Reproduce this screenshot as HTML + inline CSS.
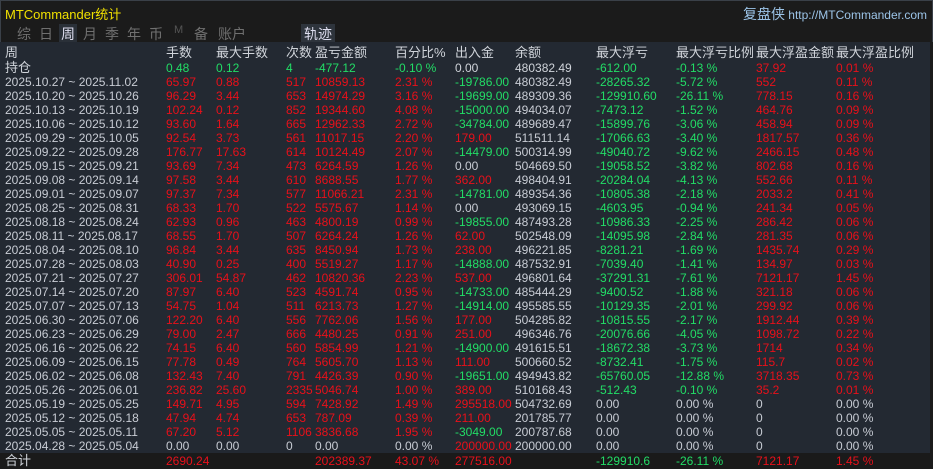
<!DOCTYPE html>
<html><head><meta charset="utf-8"><style>
body{margin:0;width:933px;height:469px;background:#1b1b1b;overflow:hidden;font-family:"Liberation Sans","Noto Sans CJK SC",sans-serif;position:relative}
.top{position:absolute;left:0;top:0;width:931px;height:41px;background:#1b1b1b;border:1px solid #3a4048;border-bottom:none}
.title{position:absolute;left:5px;top:4px;color:#f0e000;font-size:13px}
.site{position:absolute;right:6px;top:4px;color:#9cc4e8;font-size:12px}
.site b{font-weight:normal;font-size:14px}
.tabs{position:absolute;top:24px;left:17px;font-size:14px;color:#707070}
.tabs span{position:absolute;white-space:nowrap}
.panel{position:absolute;left:0;top:42px;width:930px;height:411px;background:#232932}
.tot{position:absolute;left:0;top:453px;width:930px;height:16px;background:#1a1a1a}
.row{position:absolute;left:0;height:14px;font-size:12px;line-height:14px;white-space:nowrap;color:#c8ccd4}
.row span{position:absolute}
.row span:nth-child(1){left:5px}.row span:nth-child(2){left:166px}.row span:nth-child(3){left:216px}.row span:nth-child(4){left:286px}.row span:nth-child(5){left:315px}.row span:nth-child(6){left:395px}.row span:nth-child(7){left:455px}.row span:nth-child(8){left:515px}.row span:nth-child(9){left:596px}.row span:nth-child(10){left:676px}.row span:nth-child(11){left:756px}.row span:nth-child(12){left:836px}
.hd{font-size:13px;line-height:16px;color:#d0d4da}
.r{color:#e8101a}.g{color:#22dd66}.w{color:#c0c6d0}
</style></head><body>
<div class="top"></div>
<div class="title">MTCommander统计</div>
<div class="site"><b>复盘侠</b> http://MTCommander.com</div>
<div class="tabs"><span style="left:0">综</span><span style="left:22px">日</span><span style="color:#dde;background:#2a3038;padding:0 2px;left:42px">周</span><span style="left:66px">月</span><span style="left:88px">季</span><span style="left:110px">年</span><span style="left:132px">币</span><span style="left:157px;font-size:11px;color:#555">M</span><span style="left:177px">备</span><span style="left:201px">账户</span><span style="left:284px;color:#dde;background:#2e343c;padding:0 3px">轨迹</span></div>
<div class="panel"></div>
<div class="tot"></div>
<div class="row hd" style="top:45px"><span>周</span><span>手数</span><span>最大手数</span><span>次数</span><span>盈亏金额</span><span>百分比%</span><span>出入金</span><span>余额</span><span>最大浮亏</span><span>最大浮亏比例</span><span>最大浮盈金额</span><span>最大浮盈比例</span></div>
<div class="row hd" style="top:60px;font-size:12px"><span style="font-size:13px">持仓</span><span class="g">0.48</span><span class="g">0.12</span><span class="g">4</span><span class="g">-477.12</span><span class="g">-0.10 %</span><span>0.00</span><span>480382.49</span><span class="g">-612.00</span><span class="g">-0.13 %</span><span class="r">37.92</span><span class="r">0.01 %</span></div>
<div class="row" style="top:75px"><span>2025.10.27 ~ 2025.11.02</span><span class="r">65.97</span><span class="r">0.88</span><span class="r">517</span><span class="r">10859.13</span><span class="r">2.31 %</span><span class="g">-19786.00</span><span>480382.49</span><span class="g">-28265.32</span><span class="g">-5.72 %</span><span class="r">552</span><span class="r">0.11 %</span></div>
<div class="row" style="top:89px"><span>2025.10.20 ~ 2025.10.26</span><span class="r">96.29</span><span class="r">3.44</span><span class="r">653</span><span class="r">14974.29</span><span class="r">3.16 %</span><span class="g">-19699.00</span><span>489309.36</span><span class="g">-129910.60</span><span class="g">-26.11 %</span><span class="r">778.15</span><span class="r">0.16 %</span></div>
<div class="row" style="top:103px"><span>2025.10.13 ~ 2025.10.19</span><span class="r">102.24</span><span class="r">0.12</span><span class="r">852</span><span class="r">19344.60</span><span class="r">4.08 %</span><span class="g">-15000.00</span><span>494034.07</span><span class="g">-7473.12</span><span class="g">-1.52 %</span><span class="r">464.76</span><span class="r">0.09 %</span></div>
<div class="row" style="top:117px"><span>2025.10.06 ~ 2025.10.12</span><span class="r">93.60</span><span class="r">1.64</span><span class="r">665</span><span class="r">12962.33</span><span class="r">2.72 %</span><span class="g">-34784.00</span><span>489689.47</span><span class="g">-15899.76</span><span class="g">-3.06 %</span><span class="r">458.94</span><span class="r">0.09 %</span></div>
<div class="row" style="top:131px"><span>2025.09.29 ~ 2025.10.05</span><span class="r">92.54</span><span class="r">3.73</span><span class="r">561</span><span class="r">11017.15</span><span class="r">2.20 %</span><span class="r">179.00</span><span>511511.14</span><span class="g">-17066.63</span><span class="g">-3.40 %</span><span class="r">1817.57</span><span class="r">0.36 %</span></div>
<div class="row" style="top:145px"><span>2025.09.22 ~ 2025.09.28</span><span class="r">176.77</span><span class="r">17.63</span><span class="r">614</span><span class="r">10124.49</span><span class="r">2.07 %</span><span class="g">-14479.00</span><span>500314.99</span><span class="g">-49040.72</span><span class="g">-9.62 %</span><span class="r">2466.15</span><span class="r">0.48 %</span></div>
<div class="row" style="top:159px"><span>2025.09.15 ~ 2025.09.21</span><span class="r">93.69</span><span class="r">7.34</span><span class="r">473</span><span class="r">6264.59</span><span class="r">1.26 %</span><span>0.00</span><span>504669.50</span><span class="g">-19058.52</span><span class="g">-3.82 %</span><span class="r">802.68</span><span class="r">0.16 %</span></div>
<div class="row" style="top:173px"><span>2025.09.08 ~ 2025.09.14</span><span class="r">97.58</span><span class="r">3.44</span><span class="r">610</span><span class="r">8688.55</span><span class="r">1.77 %</span><span class="r">362.00</span><span>498404.91</span><span class="g">-20284.04</span><span class="g">-4.13 %</span><span class="r">552.66</span><span class="r">0.11 %</span></div>
<div class="row" style="top:187px"><span>2025.09.01 ~ 2025.09.07</span><span class="r">97.37</span><span class="r">7.34</span><span class="r">577</span><span class="r">11066.21</span><span class="r">2.31 %</span><span class="g">-14781.00</span><span>489354.36</span><span class="g">-10805.38</span><span class="g">-2.18 %</span><span class="r">2033.2</span><span class="r">0.41 %</span></div>
<div class="row" style="top:201px"><span>2025.08.25 ~ 2025.08.31</span><span class="r">68.33</span><span class="r">1.70</span><span class="r">522</span><span class="r">5575.67</span><span class="r">1.14 %</span><span>0.00</span><span>493069.15</span><span class="g">-4603.95</span><span class="g">-0.94 %</span><span class="r">241.34</span><span class="r">0.05 %</span></div>
<div class="row" style="top:215px"><span>2025.08.18 ~ 2025.08.24</span><span class="r">62.93</span><span class="r">0.96</span><span class="r">463</span><span class="r">4800.19</span><span class="r">0.99 %</span><span class="g">-19855.00</span><span>487493.28</span><span class="g">-10986.33</span><span class="g">-2.25 %</span><span class="r">286.42</span><span class="r">0.06 %</span></div>
<div class="row" style="top:229px"><span>2025.08.11 ~ 2025.08.17</span><span class="r">68.55</span><span class="r">1.70</span><span class="r">507</span><span class="r">6264.24</span><span class="r">1.26 %</span><span class="r">62.00</span><span>502548.09</span><span class="g">-14095.98</span><span class="g">-2.84 %</span><span class="r">281.35</span><span class="r">0.06 %</span></div>
<div class="row" style="top:243px"><span>2025.08.04 ~ 2025.08.10</span><span class="r">96.84</span><span class="r">3.44</span><span class="r">635</span><span class="r">8450.94</span><span class="r">1.73 %</span><span class="r">238.00</span><span>496221.85</span><span class="g">-8281.21</span><span class="g">-1.69 %</span><span class="r">1435.74</span><span class="r">0.29 %</span></div>
<div class="row" style="top:257px"><span>2025.07.28 ~ 2025.08.03</span><span class="r">40.90</span><span class="r">0.25</span><span class="r">400</span><span class="r">5519.27</span><span class="r">1.17 %</span><span class="g">-14888.00</span><span>487532.91</span><span class="g">-7039.40</span><span class="g">-1.41 %</span><span class="r">134.97</span><span class="r">0.03 %</span></div>
<div class="row" style="top:271px"><span>2025.07.21 ~ 2025.07.27</span><span class="r">306.01</span><span class="r">54.87</span><span class="r">462</span><span class="r">10820.36</span><span class="r">2.23 %</span><span class="r">537.00</span><span>496801.64</span><span class="g">-37291.31</span><span class="g">-7.61 %</span><span class="r">7121.17</span><span class="r">1.45 %</span></div>
<div class="row" style="top:285px"><span>2025.07.14 ~ 2025.07.20</span><span class="r">87.97</span><span class="r">6.40</span><span class="r">523</span><span class="r">4591.74</span><span class="r">0.95 %</span><span class="g">-14733.00</span><span>485444.29</span><span class="g">-9400.52</span><span class="g">-1.88 %</span><span class="r">321.18</span><span class="r">0.06 %</span></div>
<div class="row" style="top:299px"><span>2025.07.07 ~ 2025.07.13</span><span class="r">54.75</span><span class="r">1.04</span><span class="r">511</span><span class="r">6213.73</span><span class="r">1.27 %</span><span class="g">-14914.00</span><span>495585.55</span><span class="g">-10129.35</span><span class="g">-2.01 %</span><span class="r">299.92</span><span class="r">0.06 %</span></div>
<div class="row" style="top:313px"><span>2025.06.30 ~ 2025.07.06</span><span class="r">122.20</span><span class="r">6.40</span><span class="r">556</span><span class="r">7762.06</span><span class="r">1.56 %</span><span class="r">177.00</span><span>504285.82</span><span class="g">-10815.55</span><span class="g">-2.17 %</span><span class="r">1912.44</span><span class="r">0.39 %</span></div>
<div class="row" style="top:327px"><span>2025.06.23 ~ 2025.06.29</span><span class="r">79.00</span><span class="r">2.47</span><span class="r">666</span><span class="r">4480.25</span><span class="r">0.91 %</span><span class="r">251.00</span><span>496346.76</span><span class="g">-20076.66</span><span class="g">-4.05 %</span><span class="r">1098.72</span><span class="r">0.22 %</span></div>
<div class="row" style="top:341px"><span>2025.06.16 ~ 2025.06.22</span><span class="r">74.15</span><span class="r">6.40</span><span class="r">560</span><span class="r">5854.99</span><span class="r">1.21 %</span><span class="g">-14900.00</span><span>491615.51</span><span class="g">-18672.38</span><span class="g">-3.73 %</span><span class="r">1714</span><span class="r">0.34 %</span></div>
<div class="row" style="top:355px"><span>2025.06.09 ~ 2025.06.15</span><span class="r">77.78</span><span class="r">0.49</span><span class="r">764</span><span class="r">5605.70</span><span class="r">1.13 %</span><span class="r">111.00</span><span>500660.52</span><span class="g">-8732.41</span><span class="g">-1.75 %</span><span class="r">115.7</span><span class="r">0.02 %</span></div>
<div class="row" style="top:369px"><span>2025.06.02 ~ 2025.06.08</span><span class="r">132.43</span><span class="r">7.40</span><span class="r">791</span><span class="r">4426.39</span><span class="r">0.90 %</span><span class="g">-19651.00</span><span>494943.82</span><span class="g">-65760.05</span><span class="g">-12.88 %</span><span class="r">3718.35</span><span class="r">0.73 %</span></div>
<div class="row" style="top:383px"><span>2025.05.26 ~ 2025.06.01</span><span class="r">236.82</span><span class="r">25.60</span><span class="r">2335</span><span class="r">5046.74</span><span class="r">1.00 %</span><span class="r">389.00</span><span>510168.43</span><span class="g">-512.43</span><span class="g">-0.10 %</span><span class="r">35.2</span><span class="r">0.01 %</span></div>
<div class="row" style="top:397px"><span>2025.05.19 ~ 2025.05.25</span><span class="r">149.71</span><span class="r">4.95</span><span class="r">594</span><span class="r">7428.92</span><span class="r">1.49 %</span><span class="r">295518.00</span><span>504732.69</span><span>0.00</span><span>0.00 %</span><span>0</span><span>0.00 %</span></div>
<div class="row" style="top:411px"><span>2025.05.12 ~ 2025.05.18</span><span class="r">47.94</span><span class="r">4.74</span><span class="r">653</span><span class="r">787.09</span><span class="r">0.39 %</span><span class="r">211.00</span><span>201785.77</span><span>0.00</span><span>0.00 %</span><span>0</span><span>0.00 %</span></div>
<div class="row" style="top:425px"><span>2025.05.05 ~ 2025.05.11</span><span class="r">67.20</span><span class="r">5.12</span><span class="r">1106</span><span class="r">3836.68</span><span class="r">1.95 %</span><span class="g">-3049.00</span><span>200787.68</span><span>0.00</span><span>0.00 %</span><span>0</span><span>0.00 %</span></div>
<div class="row" style="top:439px"><span>2025.04.28 ~ 2025.05.04</span><span>0.00</span><span>0.00</span><span>0</span><span>0.00</span><span>0.00 %</span><span class="r">200000.00</span><span>200000.00</span><span>0.00</span><span>0.00 %</span><span>0</span><span>0.00 %</span></div>
<div class="row" style="top:454px"><span style="font-size:13px;color:#d0d4da">合计</span><span class="r">2690.24</span><span></span><span></span><span class="r">202389.37</span><span class="r">43.07 %</span><span class="r">277516.00</span><span></span><span class="g">-129910.6</span><span class="g">-26.11 %</span><span class="r">7121.17</span><span class="r">1.45 %</span></div>
</body></html>
